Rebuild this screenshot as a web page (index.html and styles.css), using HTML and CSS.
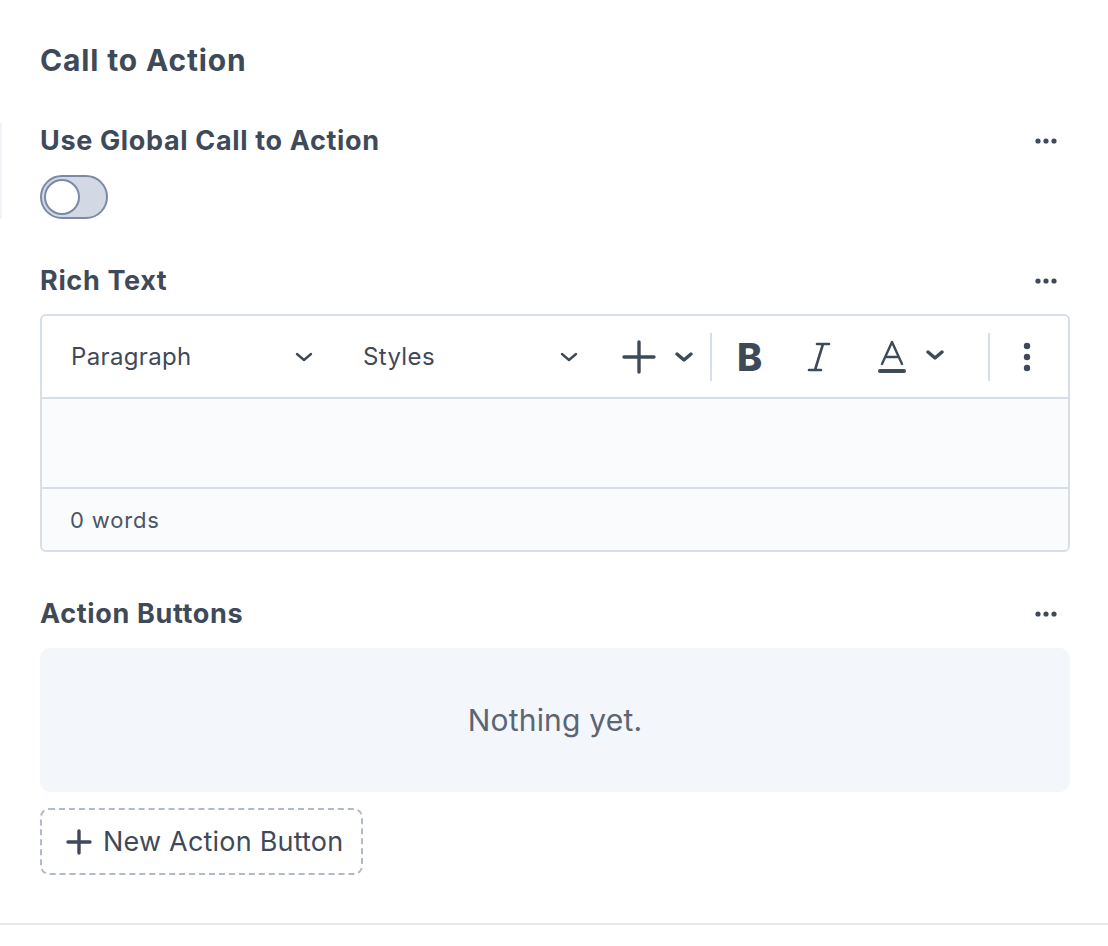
FILE: index.html
```html
<!DOCTYPE html>
<html>
<head>
<meta charset="utf-8">
<link rel="stylesheet" href="styles.css">
</head>
<body>
<div class="page">
  <div class="panel">
    <h1 class="title">Call to Action</h1>

    <div class="field field-highlight">
      <div class="field-head">
        <span class="label">Use Global Call to Action</span>
        <span class="more"><svg width="22" height="6" viewBox="0 0 22 6"><circle cx="3" cy="3" r="2.6"/><circle cx="11" cy="3" r="2.6"/><circle cx="19" cy="3" r="2.6"/></svg></span>
      </div>
      <div class="toggle"><div class="knob"></div></div>
    </div>

    <div class="field">
      <div class="field-head">
        <span class="label">Rich Text</span>
        <span class="more"><svg width="22" height="6" viewBox="0 0 22 6"><circle cx="3" cy="3" r="2.6"/><circle cx="11" cy="3" r="2.6"/><circle cx="19" cy="3" r="2.6"/></svg></span>
      </div>
      <div class="editor">
        <div class="toolbar">
          <div class="tb-select tb-para"><span>Paragraph</span><svg class="chev" width="18" height="10" viewBox="0 0 18 10"><path d="M2 2l7 6 7-6"/></svg></div>
          <div class="tb-select tb-styles"><span>Styles</span><svg class="chev" width="18" height="10" viewBox="0 0 18 10"><path d="M2 2l7 6 7-6"/></svg></div>
          <div class="tb-btn tb-plus"><svg width="34" height="34" viewBox="0 0 34 34"><path d="M17 2v30M2 17h30"/></svg><svg class="chev" width="18" height="10" viewBox="0 0 18 10"><path d="M2 2l7 6 7-6"/></svg></div>
          <div class="tb-sep"></div>
          <div class="tb-btn tb-bold">B</div>
          <div class="tb-btn tb-italic"><svg width="24" height="30" viewBox="0 0 24 30"><path d="M10 2h12M2 28h12M16 2L8 28"/></svg></div>
          <div class="tb-btn tb-color"><svg width="30" height="34" viewBox="0 0 30 34"><path class="thin" d="M5 24L15 2l10 22M8.5 17h13"/><rect x="1" y="29" width="28" height="4" rx="2"/></svg><svg class="chev" width="18" height="10" viewBox="0 0 18 10"><path d="M2 2l7 6 7-6"/></svg></div>
          <div class="tb-sep tb-sep2"></div>
          <div class="tb-btn tb-vdots"><svg width="8" height="30" viewBox="0 0 8 30"><circle cx="4" cy="4" r="3.2"/><circle cx="4" cy="15" r="3.2"/><circle cx="4" cy="26" r="3.2"/></svg></div>
        </div>
        <div class="editor-body"></div>
        <div class="statusbar">0 words</div>
      </div>
    </div>

    <div class="field">
      <div class="field-head">
        <span class="label">Action Buttons</span>
        <span class="more"><svg width="22" height="6" viewBox="0 0 22 6"><circle cx="3" cy="3" r="2.6"/><circle cx="11" cy="3" r="2.6"/><circle cx="19" cy="3" r="2.6"/></svg></span>
      </div>
      <div class="empty">Nothing yet.</div>
      <div class="new-btn"><svg width="26" height="26" viewBox="0 0 26 26"><path d="M13 2v22M2 13h22"/></svg><span>New Action Button</span></div>
    </div>
  </div>
  <div class="bottom-rule"></div>
</div>
</body>
</html>
```

FILE: styles.css
```css
* { box-sizing: border-box; }
html, body { margin: 0; padding: 0; background: #ffffff; }
body {
  font-family: Inter, "Noto Sans", "Liberation Sans", sans-serif;
  color: #3f4a59;
}
.page { width: 1108px; height: 946px; position: relative; }
.panel { padding: 40px 38px 0 40px; }
.title {
  margin: 0;
  font-size: 30px;
  line-height: 40px;
  font-weight: 700;
  letter-spacing: 0.85px;
  color: #3f4a59;
}
.field { margin-top: 40px; }
.field-highlight { margin-left: -40px; padding-left: 40px; border-left: 2px solid #f0f3f7; margin-top: 43px; }
.field-highlight .field-head, .field-highlight .toggle { margin-left: -2px; }
.field-head {
  display: flex;
  justify-content: space-between;
  align-items: center;
  height: 36px;
}
.label {
  font-size: 27px;
  font-weight: 700;
  line-height: 36px;
  letter-spacing: 0.65px;
  color: #3f4a59;
}
.more { display: flex; padding-right: 13px; }
.more svg { fill: #3f4a59; }
.toggle {
  margin-top: 16px;
  width: 68px;
  height: 44px;
  border: 2px solid #7a8aa6;
  background: #d2d9e4;
  border-radius: 22px;
  padding: 2px;
}
.knob {
  width: 36px;
  height: 36px;
  border-radius: 50%;
  background: #ffffff;
  border: 2px solid #7a8aa6;
}
.field + .field { margin-top: 44px; }
.editor {
  margin-top: 15px;
  border: 2px solid #d8dee7;
  border-radius: 6px;
  overflow: hidden;
}
.toolbar {
  height: 83px;
  display: flex;
  align-items: center;
  padding-left: 29px;
  background: #ffffff;
  border-bottom: 2px solid #d8dee7;
}
.tb-select {
  display: flex;
  align-items: center;
  justify-content: space-between;
  font-size: 24px;
  letter-spacing: 0.35px;
  color: #3f4a59;
}
.tb-para { width: 242px; }
.tb-styles { width: 215px; margin-left: 50px; }
.chev { fill: none; stroke: #3f4a59; stroke-width: 2.4; stroke-linecap: round; stroke-linejoin: round; }
.tb-btn svg { fill: none; stroke: #3f4a59; stroke-width: 3.4; stroke-linecap: round; }
.tb-plus { display: flex; align-items: center; margin-left: 44px; gap: 19px; }
.tb-sep { width: 2px; height: 48px; background: #d8dee7; margin-left: 17px; }
.tb-bold {
  margin-left: 25px;
  font-size: 38px;
  font-weight: 800;
  line-height: 1;
  color: #3f4a59;
  width: 28px;
}
.tb-italic { margin-left: 42px; display: flex; }
.tb-italic svg { stroke-width: 2.6; }
.tb-color { margin-left: 46px; display: flex; align-items: center; gap: 19px; }
.tb-color svg .thin { stroke-width: 2.4; stroke-linejoin: round; }
.tb-color svg rect { fill: #3f4a59; stroke: none; }
.tb-color .chev { margin-top: -4px; }
.tb-sep2 { margin-left: 44px; }
.tb-vdots { margin-left: 33px; display: flex; }
.tb-vdots svg { fill: #3f4a59; stroke: none; }
.editor-body {
  height: 90px;
  background: #fafbfd;
  border-bottom: 2px solid #d8dee7;
}
.statusbar {
  height: 61px;
  background: #fafbfd;
  padding-left: 28px;
  display: flex;
  align-items: center;
  font-size: 22px;
  letter-spacing: 0.85px;
  color: #4a5565;
}
.empty {
  margin-top: 16px;
  height: 144px;
  background: #f3f6fa;
  border-radius: 10px;
  display: flex;
  align-items: center;
  justify-content: center;
  font-size: 30px;
  letter-spacing: 0.2px;
  color: #5b6573;
}
.new-btn {
  margin-top: 16px;
  width: 323px;
  height: 67px;
  border: 2px dashed #b1bac8;
  border-radius: 9px;
  display: flex;
  align-items: center;
  padding-left: 24px;
  gap: 11px;
  font-size: 27px;
  letter-spacing: 0.2px;
  color: #3f4a59;
}
.new-btn svg { fill: none; stroke: #3f4a59; stroke-width: 3.4; stroke-linecap: round; }
.bottom-rule {
  position: absolute;
  left: 0; right: 0; top: 923px;
  height: 2px;
  background: #e8e9eb;
}
```
